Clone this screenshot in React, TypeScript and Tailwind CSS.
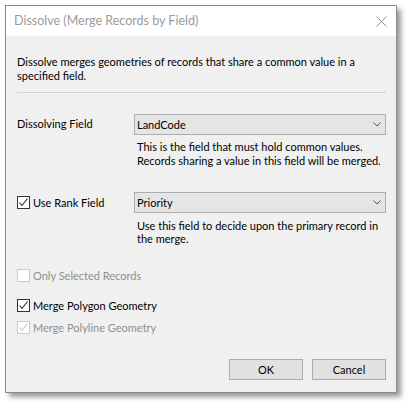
import React from "react";

const font = { fontFamily: 'Lato, "Liberation Sans", sans-serif' };

function Chevron() {
  return (
    <svg width="8" height="5" viewBox="0 0 8 5" className="shrink-0">
      <path d="M0.5 0.5 L4 4 L7.5 0.5" fill="none" stroke="#555" strokeWidth="1" />
    </svg>
  );
}

function Select({ value }: { value: string }) {
  return (
    <div className="flex h-[21px] items-center justify-between border border-[#adadad] bg-[#e5e5e5] pl-[2px] pr-[4px] text-[11px] leading-[14px] text-black">
      <span>{value}</span>
      <Chevron />
    </div>
  );
}

function Check({
  checked,
  disabled,
  label,
}: {
  checked?: boolean;
  disabled?: boolean;
  label: string;
}) {
  return (
    <div className="flex h-[15px] items-center gap-[3px]">
      <div
        className={`flex h-[13px] w-[13px] shrink-0 items-center justify-center border bg-white ${
          disabled ? "border-[#cccccc]" : "border-[#333333]"
        }`}
      >
        {checked ? (
          <svg width="11" height="11" viewBox="0 0 11 11">
            <path
              d="M1.5 5.5 L4 8.5 L9.5 1.5"
              fill="none"
              stroke={disabled ? "#c4c4c4" : "#222"}
              strokeWidth="1.1"
            />
          </svg>
        ) : null}
      </div>
      <span
        className={`whitespace-nowrap text-[11px] leading-[14px] ${
          disabled ? "text-[#8f8f8f]" : "text-black"
        }`}
      >
        {label}
      </span>
    </div>
  );
}

function Button({ children }: { children: React.ReactNode }) {
  return (
    <button className="flex h-[21px] w-[74px] items-center justify-center border border-[#adadad] bg-[#e1e1e1] text-[11px] leading-[14px] text-black">
      {children}
    </button>
  );
}

export default function App() {
  return (
    <div className="h-[404px] w-[408px] bg-white pl-[5px] pt-[5px]" style={font}>
      <div className="flex h-[388px] w-[392px] flex-col border border-[#8a8a8a] bg-[#f0f0f0] shadow-[4px_4px_5px_rgba(0,0,0,0.4)]">
        <div className="flex h-[30px] shrink-0 items-center justify-between bg-white pl-[8px] pr-[9px]">
          <span className="text-[12.5px] leading-[16px] text-[#9b9b9b]">
            Dissolve (Merge Records by Field)
          </span>
          <svg width="11" height="11" viewBox="0 0 11 11">
            <path d="M0.5 0.5 L10.5 10.5 M10.5 0.5 L0.5 10.5" stroke="#8f8f8f" strokeWidth="1" />
          </svg>
        </div>

        <div className="flex flex-1 flex-col pl-[11px] pr-[10px]">
          <p className="mt-[19px] text-[11px] leading-[14px] text-black">
            Dissolve merges geometries of records that share a common value in a
            <br />
            specified field.
          </p>
          <div className="mt-[9px] h-px bg-[#d0d0d0]" />

          <div className="mt-[21px] grid grid-cols-[117px_minmax(0,1fr)]">
            <div className="pt-[2px] text-[11px] leading-[15px] text-black">Dissolving Field</div>
            <div>
              <Select value="LandCode" />
              <p className="mt-[5px] whitespace-nowrap pl-[3px] text-[11px] leading-[14px] text-black">
                This is the field that must hold common values.
                <br />
                Records sharing a value in this field will be merged.
              </p>
            </div>
          </div>

          <div className="mt-[24px] grid grid-cols-[117px_minmax(0,1fr)]">
            <div className="pt-[3px]">
              <Check checked label="Use Rank Field" />
            </div>
            <div>
              <Select value="Priority" />
              <p className="mt-[6px] whitespace-nowrap pl-[3px] text-[11px] leading-[13px] text-black">
                Use this field to decide upon the primary record in
                <br />
                the merge.
              </p>
            </div>
          </div>

          <div className="mt-[23px]">
            <Check disabled label="Only Selected Records" />
          </div>
          <div className="mt-[15px]">
            <Check checked label="Merge Polygon Geometry" />
          </div>
          <div className="mt-[7px]">
            <Check checked disabled label="Merge Polyline Geometry" />
          </div>

          <div className="mt-auto mb-[12px] flex justify-end gap-[9px]">
            <Button>OK</Button>
            <Button>Cancel</Button>
          </div>
        </div>
      </div>
    </div>
  );
}
